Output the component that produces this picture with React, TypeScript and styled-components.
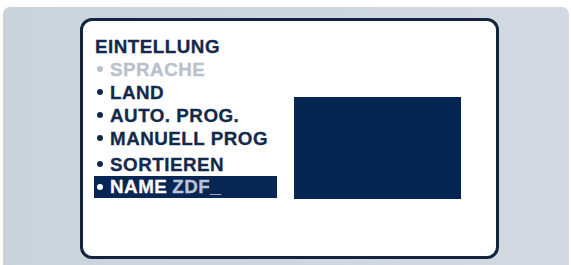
import React from "react";
import styled, { createGlobalStyle } from "styled-components";

const Global = createGlobalStyle`
  html, body { margin: 0; padding: 0; background: #ffffff; }
  body { width: 571px; height: 265px; overflow: hidden; }
`;

const Page = styled.div`
  width: 571px;
  height: 265px;
  box-sizing: border-box;
  padding: 7px 2px 0 3px;
  background: #ffffff;
`;

const Panel = styled.div`
  height: 258px;
  box-sizing: border-box;
  background: linear-gradient(90deg, #cad2dc 0%, #ced6e0 60%, #d3dae3 100%);
  border-radius: 7px 7px 0 0;
  padding: 11px 0 0 77px;
`;

const Card = styled.div`
  width: 419px;
  height: 241px;
  box-sizing: border-box;
  background: #ffffff;
  border: 3px solid #14243d;
  border-radius: 12px;
  padding: 14px 0 0 11px;
`;

const Content = styled.div`
  display: flex;
  align-items: flex-end;
  gap: 17px;
`;

const Menu = styled.div`
  width: 183px;
  display: flex;
  flex-direction: column;
  font-family: "Liberation Sans", Arial, sans-serif;
  font-weight: 700;
  font-size: 18.8px;
  letter-spacing: 0.5px;
  white-space: nowrap;
  -webkit-text-stroke: 0.3px currentColor;
`;

const Title = styled.div`
  height: 23px;
  line-height: 24px;
  padding-left: 1px;
  color: #13294c;
`;

const Row = styled.div<{ $dim?: boolean; $active?: boolean; $gapTop?: number }>`
  display: flex;
  align-items: center;
  height: ${(p) => (p.$active ? 22 : 23)}px;
  line-height: ${(p) => (p.$active ? 22 : 23)}px;
  margin-top: ${(p) => p.$gapTop ?? 0}px;
  padding-left: 3px;
  color: ${(p) => (p.$active ? "#ffffff" : p.$dim ? "#b9c1cc" : "#13294c")};
  background: ${(p) => (p.$active ? "#072654" : "transparent")};
`;

const Dot = styled.span`
  display: inline-block;
  width: 6px;
  height: 6px;
  border-radius: 50%;
  background: currentColor;
  margin: -1px 7px 0 0;
  flex: none;
`;

const Value = styled.span`
  color: #b9c5d8;
  margin-left: 5px;
`;

const Preview = styled.div`
  width: 167px;
  height: 102px;
  background: #052552;
  margin-bottom: -1px;
`;

export default function App() {
  return (
    <>
      <Global />
      <Page>
        <Panel>
          <Card>
            <Content>
              <Menu>
                <Title>EINTELLUNG</Title>
                <Row $dim>
                  <Dot />
                  SPRACHE
                </Row>
                <Row>
                  <Dot />
                  LAND
                </Row>
                <Row>
                  <Dot />
                  AUTO. PROG.
                </Row>
                <Row>
                  <Dot />
                  MANUELL PROG
                </Row>
                <Row $gapTop={3}>
                  <Dot />
                  SORTIEREN
                </Row>
                <Row $active>
                  <Dot />
                  NAME
                  <Value>ZDF_</Value>
                </Row>
              </Menu>
              <Preview />
            </Content>
          </Card>
        </Panel>
      </Page>
    </>
  );
}
